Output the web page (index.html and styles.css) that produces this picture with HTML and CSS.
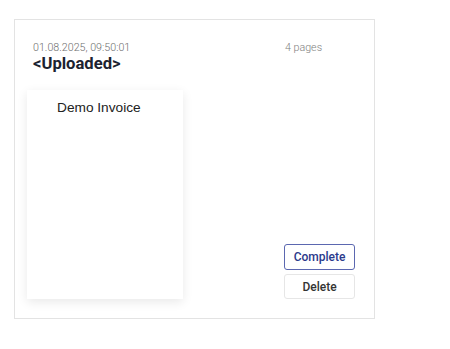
FILE: index.html
```html
<!DOCTYPE html>
<html lang="en">
<head>
  <meta charset="UTF-8">
  <meta name="viewport" content="width=device-width, initial-scale=1.0">
  <title>Document</title>
  <link rel="stylesheet" href="styles.css">
</head>
<body>
  <div class="doc-card">
    <div class="doc-main">
      <div class="doc-date">01.08.2025, 09:50:01</div>
      <div class="doc-title">&lt;Uploaded&gt;</div>
      <div class="doc-thumb">
        <div class="thumb-text">Demo Invoice</div>
      </div>
    </div>
    <div class="doc-side">
      <div class="doc-pages">4 pages</div>
      <div class="doc-actions">
        <button class="btn btn-primary">Complete</button>
        <button class="btn">Delete</button>
      </div>
    </div>
  </div>
</body>
</html>
```

FILE: styles.css
```css
body {
  margin: 0;
  padding: 19px 14px;
  font-family: Roboto, "Liberation Sans", sans-serif;
  background: #fff;
}
.doc-card {
  box-sizing: border-box;
  width: 361px;
  height: 300px;
  border: 1px solid #e3e3e3;
  padding: 19px 19px 19px 18px;
  display: flex;
  justify-content: space-between;
}
.doc-main {
  display: flex;
  flex-direction: column;
}
.doc-date {
  font-size: 10.7px;
  font-weight: 300;
  line-height: 14px;
  color: #6e6e6e;
  margin-top: 2px;
}
.doc-title {
  font-size: 16.6px;
  font-weight: 700;
  line-height: 18px;
  color: #1c2230;
}
.doc-thumb {
  margin: 17px 0 0 -6px;
  width: 156px;
  flex: 1;
  background: #fff;
  box-shadow: 0 3px 10px rgba(0, 0, 0, 0.09);
}
.thumb-text {
  font-family: "Liberation Sans", Arial, sans-serif;
  font-size: 13.7px;
  color: #222;
  padding: 10px 0 0 30px;
}
.doc-side {
  width: 71px;
  display: flex;
  flex-direction: column;
  justify-content: space-between;
}
.doc-pages {
  font-size: 10.7px;
  font-weight: 300;
  line-height: 14px;
  color: #7e7e7e;
  margin-top: 2px;
  padding-left: 1px;
}
.doc-actions {
  display: flex;
  flex-direction: column;
  gap: 4px;
}
.btn {
  box-sizing: border-box;
  width: 71px;
  height: 25px;
  padding: 0;
  font-family: Roboto, sans-serif;
  font-size: 12px;
  font-weight: 500;
  color: #333;
  background: #fff;
  border: 1px solid #e6e6e6;
  border-radius: 3px;
}
.btn-primary {
  height: 26px;
  color: #2b3a8c;
  border-color: #5b67b0;
}
```
